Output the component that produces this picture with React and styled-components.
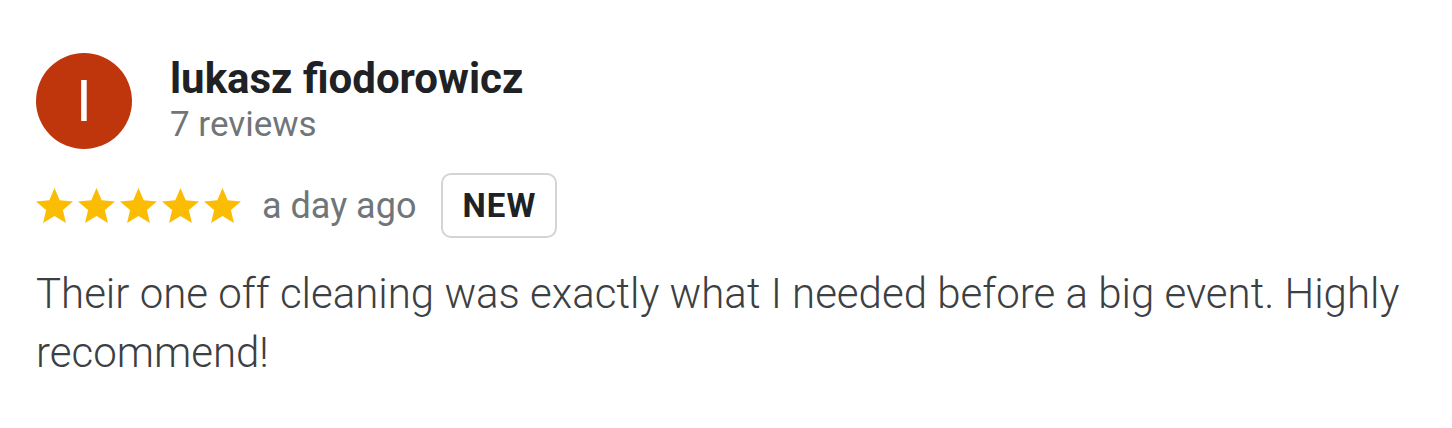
import styled, { createGlobalStyle } from 'styled-components';

const GlobalStyle = createGlobalStyle`
  body {
    margin: 0;
    background: #ffffff;
    font-family: Roboto, "Liberation Sans", sans-serif;
  }
`;

const Card = styled.div`
  padding: 53px 36px 0 36px;
  width: 1452px;
  box-sizing: border-box;
`;

const Header = styled.div`
  display: flex;
  align-items: center;
  gap: 38px;
`;

const Avatar = styled.div`
  width: 96px;
  height: 96px;
  border-radius: 50%;
  background: #bf360c;
  color: #ffffff;
  display: flex;
  align-items: center;
  justify-content: center;
  font-size: 58px;
  font-weight: 400;
  line-height: 1;
  flex-shrink: 0;
`;

const Who = styled.div`
  display: flex;
  flex-direction: column;
`;

const Name = styled.div`
  font-size: 42px;
  font-weight: 700;
  color: #202124;
  line-height: 48px;
`;

const Count = styled.div`
  font-size: 35px;
  color: #70757a;
  line-height: 44px;
`;

const Meta = styled.div`
  display: flex;
  align-items: center;
  margin-top: 24px;
`;

const Stars = styled.div`
  display: flex;
  gap: 5px;
  margin-right: 21px;
`;

const Ago = styled.span`
  font-size: 36px;
  color: #70757a;
  margin-right: 25px;
`;

const Badge = styled.span`
  display: inline-flex;
  align-items: center;
  justify-content: center;
  box-sizing: border-box;
  width: 116px;
  height: 65px;
  border: 2px solid #d4d4d4;
  border-radius: 10px;
  font-size: 33px;
  font-weight: 700;
  color: #202124;
  letter-spacing: 1px;
`;

const Body = styled.p`
  margin: 26px 0 0 0;
  font-size: 42px;
  font-weight: 300;
  line-height: 59px;
  color: #3c4043;
  max-width: 1380px;
`;

const Star = () => (
  <svg width="37" height="35" viewBox="2.2 2.6 19.6 18.7" preserveAspectRatio="none">
    <path
      fill="#fbbc04"
      d="M12 2.6l2.75 6.55 7.05.6-5.35 4.65 1.6 6.9L12 17.6l-6.05 3.7 1.6-6.9L2.2 9.75l7.05-.6z"
    />
  </svg>
);

export default function App() {
  return (
    <>
      <GlobalStyle />
      <Card>
        <Header>
          <Avatar>I</Avatar>
          <Who>
            <Name>lukasz fiodorowicz</Name>
            <Count>7 reviews</Count>
          </Who>
        </Header>
        <Meta>
          <Stars>
            {[0, 1, 2, 3, 4].map((i) => (
              <Star key={i} />
            ))}
          </Stars>
          <Ago>a day ago</Ago>
          <Badge>NEW</Badge>
        </Meta>
        <Body>
          Their one off cleaning was exactly what I needed before a big event. Highly recommend!
        </Body>
      </Card>
    </>
  );
}
